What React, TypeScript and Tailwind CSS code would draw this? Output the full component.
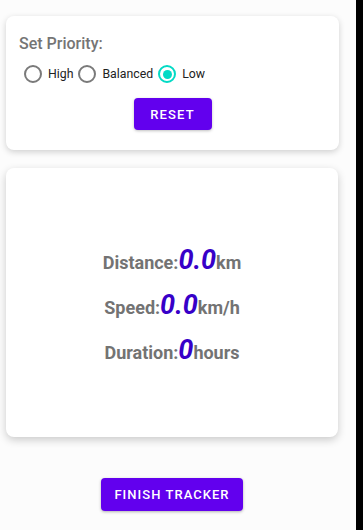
const font = { fontFamily: "Roboto, 'Noto Sans', sans-serif" };

function Radio({ label, checked }: { label: string; checked?: boolean }) {
  return (
    <label className="flex items-center gap-[6px]">
      <span
        className={
          checked
            ? "flex h-[18px] w-[18px] items-center justify-center rounded-full border-2 border-[#03dac5]"
            : "h-[18px] w-[18px] rounded-full border-2 border-[#7a7a7a]"
        }
      >
        {checked && <span className="h-[9px] w-[9px] rounded-full bg-[#03dac5]" />}
      </span>
      <span className="text-[12.3px] text-[#212121]">{label}</span>
    </label>
  );
}

function Stat({ label, value, unit }: { label: string; value: string; unit: string }) {
  return (
    <div className="flex items-baseline justify-center font-bold text-[#737373]">
      <span className="text-[18px]">{label}</span>
      <span className="text-[27px] italic text-[#3700c8] leading-none">{value}</span>
      <span className="text-[18px]">{unit}</span>
    </div>
  );
}

export default function App() {
  return (
    <div className="flex h-[530px] w-[363px] bg-[#fcfcfc]" style={font}>
      <div className="flex flex-1 flex-col pl-[6px] pt-[16px]">
        <div className="flex h-[134px] w-[333px] flex-col rounded-[8px] bg-white px-[13px] pt-[16px] shadow-[0_2px_6px_rgba(0,0,0,0.18)]">
          <div className="text-[16px] font-medium text-[#757575]">Set Priority:</div>
          <div className="mt-[9px] flex items-center gap-[5px] pl-[5px]">
            <Radio label="High" />
            <Radio label="Balanced" />
            <Radio label="Low" checked />
          </div>
          <div className="mt-[15px] flex justify-center">
            <button className="h-[32px] w-[78px] rounded-[4px] bg-[#6200ee] text-[13px] font-medium tracking-[0.09em] text-white shadow-[0_1px_3px_rgba(0,0,0,0.25)]">
              RESET
            </button>
          </div>
        </div>
        <div className="mt-[18px] flex h-[269px] w-[332px] flex-col justify-center gap-[16px] rounded-[8px] bg-white pt-[8px] shadow-[0_3px_8px_rgba(0,0,0,0.2)]">
          <Stat label="Distance:" value="0.0" unit="km" />
          <Stat label="Speed:" value="0.0" unit="km/h" />
          <Stat label="Duration:" value="0" unit="hours" />
        </div>
        <div className="mt-[41px] flex w-[332px] justify-center">
          <button className="h-[33px] w-[142px] rounded-[4px] bg-[#6200ee] text-[13px] font-medium tracking-[0.08em] text-white shadow-[0_1px_3px_rgba(0,0,0,0.3)]">
            FINISH TRACKER
          </button>
        </div>
      </div>
      <div className="w-[7px] bg-black" />
    </div>
  );
}
